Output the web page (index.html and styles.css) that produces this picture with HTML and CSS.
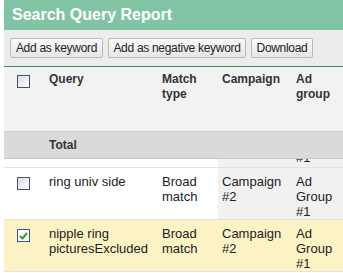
FILE: index.html
```html
<!DOCTYPE html>
<html lang="en">
<head>
  <meta charset="UTF-8">
  <title>Search Query Report</title>
  <link rel="stylesheet" href="styles.css">
</head>
<body>
  <!-- Report panel -->
  <div class="report">
    <div class="title">Search Query Report</div>

    <!-- Toolbar -->
    <div class="toolbar">
      <button class="tool-button btn-keyword">Add as keyword</button>
      <button class="tool-button btn-negative">Add as negative keyword</button>
      <button class="tool-button btn-download">Download</button>
    </div>

    <!-- Column headers -->
    <div class="row head-row">
      <div class="cell check-cell"><span class="checkbox"></span></div>
      <div class="cell">Query</div>
      <div class="cell">Match type</div>
      <div class="cell">Campaign</div>
      <div class="cell">Ad group</div>
    </div>

    <div class="row total-row">
      <div class="cell"></div>
      <div class="cell">Total</div>
      <div class="cell"></div>
      <div class="cell"></div>
      <div class="cell"></div>
    </div>

    <!-- Rows (scrolled) -->
    <div class="row-clip">
      <div class="row">
        <div class="cell check-cell"></div>
        <div class="cell"></div>
        <div class="cell"></div>
        <div class="cell shaded"></div>
        <div class="cell shaded">#1</div>
      </div>
    </div>

    <div class="row">
      <div class="cell check-cell"><span class="checkbox"></span></div>
      <div class="cell">ring univ side</div>
      <div class="cell">Broad match</div>
      <div class="cell shaded">Campaign #2</div>
      <div class="cell shaded">Ad Group #1</div>
    </div>

    <div class="row selected">
      <div class="cell check-cell">
        <span class="checkbox checked">
          <svg width="9" height="8" viewBox="0 0 9 8"><path d="M1 4L3.5 6.5L8 1" stroke="#3a9a2a" stroke-width="2" fill="none"/></svg>
        </span>
      </div>
      <div class="cell">nipple ring picturesExcluded</div>
      <div class="cell">Broad match</div>
      <div class="cell">Campaign #2</div>
      <div class="cell">Ad Group #1</div>
    </div>
  </div>
</body>
</html>
```

FILE: styles.css
```css
/* =====================
   Global
   ===================== */
body {
  margin: 0;
  background: #fff;
  font-family: "Liberation Sans", Arial, sans-serif;
  font-size: 13px;
  color: #222;
  overflow: hidden;
}

.report {
  margin-left: 4px;
}

/* =====================
   Title & toolbar
   ===================== */
.title {
  height: 30px;
  line-height: 30px;
  padding-left: 8px;
  background: #80c4a4;
  color: #fff;
  font-size: 16px;
  font-weight: bold;
}

.toolbar {
  display: flex;
  gap: 5px;
  height: 37px;
  padding: 8px 0 0 6px;
  box-sizing: border-box;
  background: #ececec;
  border-bottom: 1px solid #3d8c63;
}

.tool-button {
  flex: none;
  height: 20px;
  padding: 0;
  border: 1px solid #b9b9b9;
  border-radius: 2px;
  background: linear-gradient(#fafafa, #e6e6e6);
  font-family: inherit;
  font-size: 12px;
  letter-spacing: -0.3px;
  white-space: nowrap;
  color: #222;
}

.btn-keyword { width: 93px; }
.btn-negative { width: 138px; }
.btn-download { width: 62px; }

/* =====================
   Grid rows
   ===================== */
.row {
  display: grid;
  grid-template-columns: 41px 113px 60px 74px 1fr;
  border-bottom: 1px solid #e2e2e2;
  line-height: 15px;
}

.cell {
  padding: 6px 4px 0;
}

.check-cell {
  padding-left: 13px;
}

.shaded {
  background: #f1f1f1;
}

.head-row {
  height: 65px;
  box-sizing: border-box;
  background: #f2f2f2;
  border-bottom: 1px solid #cfcfcf;
  font-size: 12px;
  font-weight: bold;
  color: #333;
}

.head-row .cell {
  padding-top: 5px;
}

.total-row {
  height: 27px;
  box-sizing: border-box;
  background: #dadada;
  border-bottom: 1px solid #c8c8c8;
  font-size: 12px;
  font-weight: bold;
  color: #333;
}

.row-clip {
  height: 8px;
  overflow: hidden;
  display: flex;
  flex-direction: column;
  justify-content: flex-end;
  border-bottom: 1px solid #e2e2e2;
}

.row-clip .row {
  border-bottom: 0;
}

.row-clip .cell {
  padding-top: 0;
  padding-bottom: 2px;
}

.selected {
  background: #fcf3c4;
}

/* =====================
   Checkbox
   ===================== */
.checkbox {
  display: flex;
  align-items: center;
  justify-content: center;
  width: 11px;
  height: 11px;
  margin-top: 3px;
  border: 1px solid #3b5675;
  background: linear-gradient(135deg, #dcdcdc, #fff);
}

.checkbox.checked {
  background: #fff;
}
```
